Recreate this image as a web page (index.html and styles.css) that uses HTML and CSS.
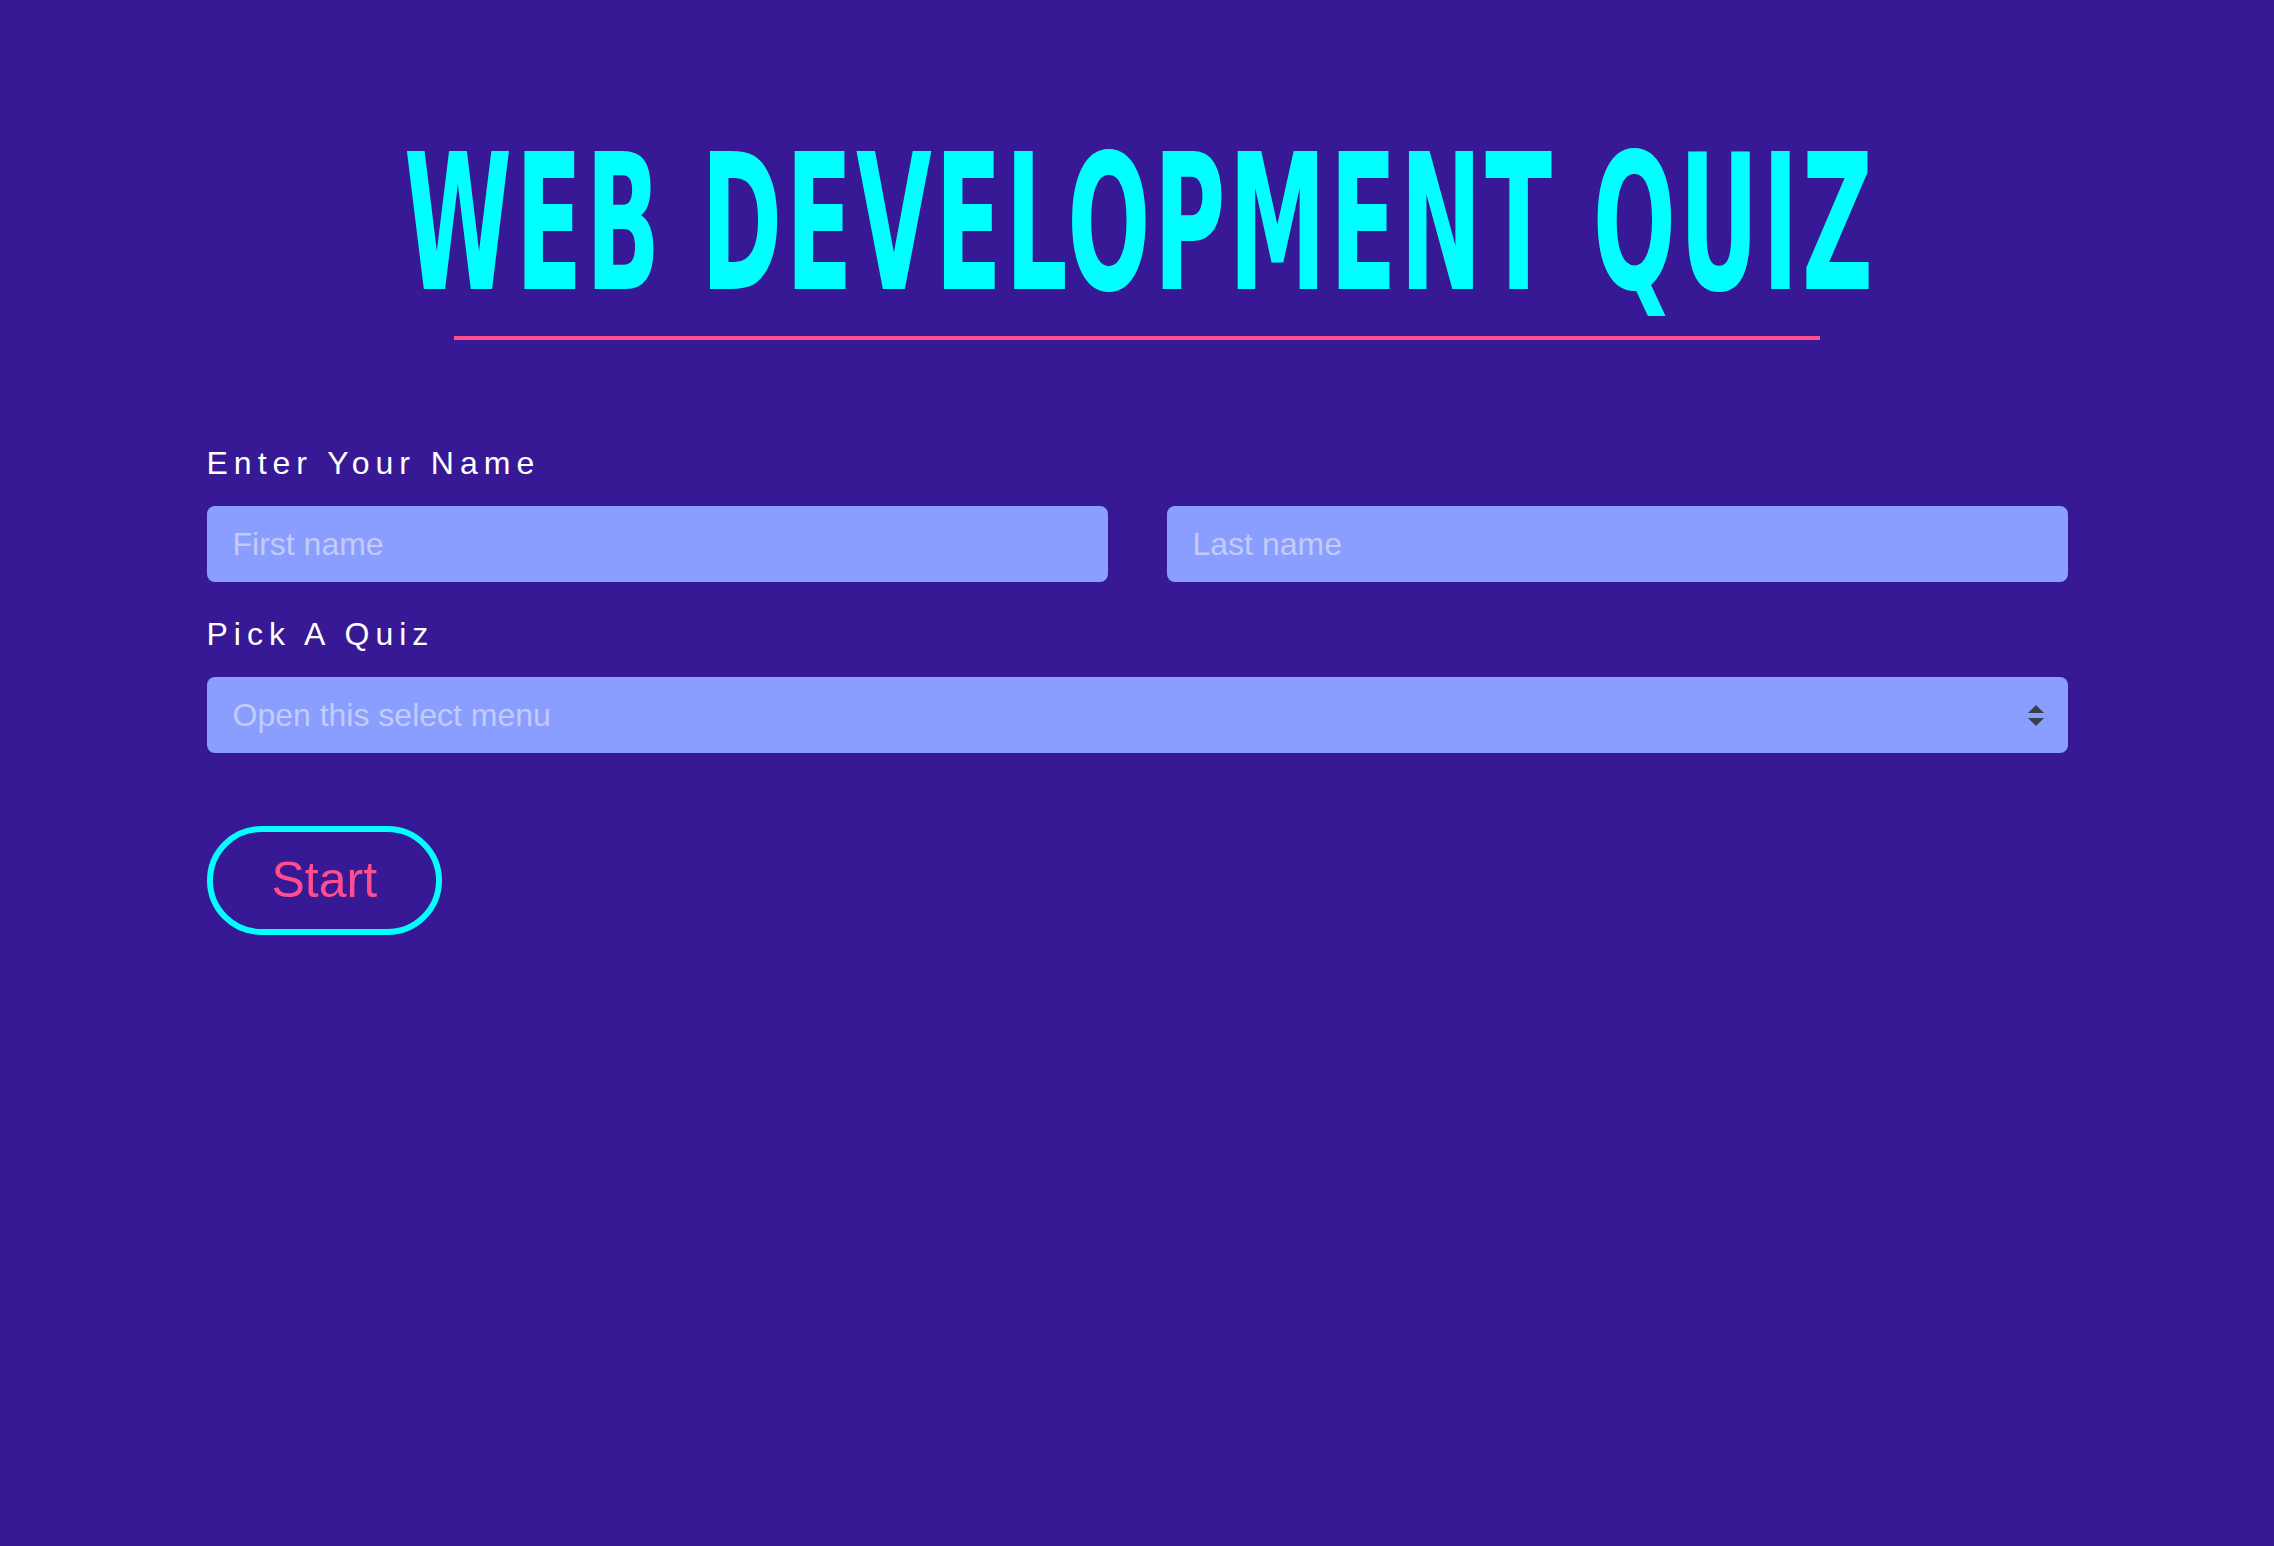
FILE: index.html
```html
<!DOCTYPE html>
<html lang="en">
<head>
<meta charset="utf-8">
<title>Web Development Quiz</title>
<link rel="stylesheet" href="styles.css">
</head>
<body>
<main class="page">
  <header class="header">
    <h1 class="title"><span class="title-text">WEB DEVELOPMENT QUIZ</span></h1>
    <div class="rule"></div>
  </header>
  <form class="quiz-form">
    <label class="form-label">Enter Your Name</label>
    <div class="name-row">
      <input class="field" type="text" placeholder="First name">
      <input class="field" type="text" placeholder="Last name">
    </div>
    <label class="form-label">Pick A Quiz</label>
    <div class="select-wrap">
      <select class="field select">
        <option selected>Open this select menu</option>
        <option>HTML</option>
        <option>CSS</option>
        <option>JavaScript</option>
      </select>
      <svg class="select-arrows" width="16" height="21" viewBox="0 0 16 21" aria-hidden="true">
        <path d="M8 0 L16 8 L0 8 Z" fill="#3b3e46"/>
        <path d="M0 13 L16 13 L8 21 Z" fill="#3b3e46"/>
      </svg>
    </div>
    <div class="actions">
      <button class="start-btn" type="button">Start</button>
    </div>
  </form>
</main>
</body>
</html>
```

FILE: styles.css
```css
html, body {
  margin: 0;
  padding: 0;
}

body {
  background: #371996;
  min-height: 1546px;
  font-family: "Liberation Sans", Arial, Helvetica, sans-serif;
}

.page {
  width: 1861px;
  margin: 0 auto;
}

.header {
  padding-top: 130px;
  display: flex;
  flex-direction: column;
  align-items: center;
  overflow: hidden;
}

.title {
  margin: 0;
  width: 100%;
  font-family: "DejaVu Sans Condensed", "Liberation Sans Narrow", "Liberation Sans", sans-serif;
  font-weight: 700;
  font-size: 189px;
  line-height: 189px;
  height: 189px;
  color: #00ffff;
  text-align: center;
  white-space: nowrap;
  display: flex;
  justify-content: center;
}

.title-text {
  display: inline-block;
  flex: none;
  letter-spacing: 6px;
  margin-right: -6px;
  transform: scaleX(0.575);
  transform-origin: center;
}

.rule {
  width: 1366px;
  height: 4px;
  margin-top: 17px;
  background: #ff4d8e;
}

.quiz-form {
  padding-top: 99px;
  display: flex;
  flex-direction: column;
}

.form-label {
  display: block;
  color: #ffffff;
  font-size: 32px;
  line-height: 48px;
  letter-spacing: 6px;
  margin-bottom: 19px;
}

.name-row {
  display: grid;
  grid-template-columns: 1fr 1fr;
  column-gap: 59px;
  margin-bottom: 28px;
}

.field {
  box-sizing: border-box;
  display: block;
  width: 100%;
  height: 76px;
  margin: 0;
  padding: 12px 24px;
  border: 2px solid #8a9eff;
  border-radius: 8px;
  background: #8a9eff;
  color: #c3cbfa;
  font-family: "Liberation Sans", Arial, Helvetica, sans-serif;
  font-size: 32px;
  line-height: 48px;
  outline: none;
}

.field::placeholder {
  color: #c3cbfa;
  opacity: 1;
}

.select-wrap {
  position: relative;
}

.select {
  appearance: none;
  -webkit-appearance: none;
  padding-right: 64px;
}

.select-arrows {
  position: absolute;
  right: 24px;
  top: 28px;
  pointer-events: none;
}

.actions {
  display: flex;
  padding-top: 73px;
}

.start-btn {
  box-sizing: border-box;
  height: 109px;
  padding: 0 59px;
  border: 6px solid #00ffff;
  border-radius: 60px;
  background: transparent;
  color: #ff4d8e;
  font-family: "Liberation Sans", Arial, Helvetica, sans-serif;
  font-size: 50px;
  line-height: 75px;
  cursor: pointer;
}
```
